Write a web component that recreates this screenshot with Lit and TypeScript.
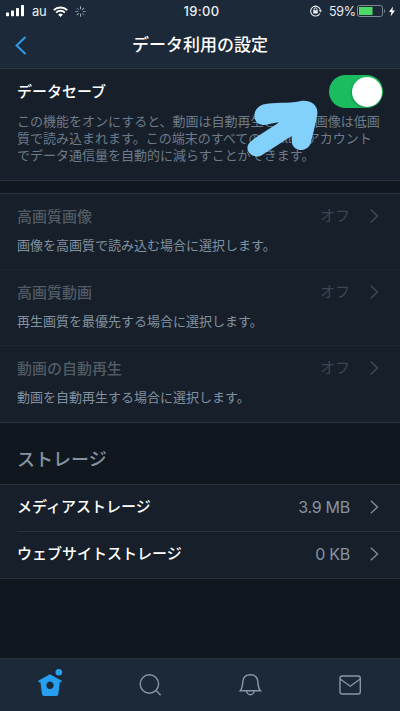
import { LitElement, html, css, svg, nothing } from "lit";
import { customElement, property } from "lit/decorators.js";

const fonts = css`"Liberation Sans", "Noto Sans CJK JP", sans-serif`;

@customElement("status-bar")
class StatusBar extends LitElement {
  static styles = css`
    :host { display: flex; height: 22px; color: #e8edf2; font-family: Inter, ${fonts}; font-size: 13px; line-height: 22px; }
    .side { flex: 1; display: flex; align-items: center; }
    .left { padding-left: 6px; }
    .right { justify-content: flex-end; padding-right: 5px; }
    .bars { width: 18px; height: 12px; margin-right: 8px; }
    .carrier { width: 14px; letter-spacing: -.4px; }
    .wifi { width: 15px; height: 11px; margin: 0 7px; }
    .spin { width: 11px; height: 11px; }
    .time { width: 40px; padding-left: 2px; box-sizing: border-box; text-align: center; font-weight: 500; letter-spacing: .35px; }
    .lock { width: 12px; height: 12px; margin-right: 7px; }
    .pct { font-size: 12.5px; letter-spacing: -.3px; width: 26px; white-space: nowrap; padding-top: 1px; }
    .batt { width: 28px; height: 12px; margin-left: 2px; }
    .bolt { width: 6px; height: 11px; margin-left: 4px; }
  `;
  render() {
    const rays = [0, 45, 90, 135, 180, 225, 270, 315];
    return html`
      <div class="side left">
        <svg class="bars" viewBox="0 0 18 12" fill="#fff">
          <rect x="0" y="7.5" width="3" height="3.8" rx=".7"/><rect x="5" y="5.5" width="3" height="5.8" rx=".7"/>
          <rect x="10" y="3" width="3" height="8.3" rx=".7"/><rect x="15" y="0" width="3" height="11.3" rx=".7"/>
        </svg>
        <span class="carrier">au</span>
        <svg class="wifi" viewBox="0 0 15 11" fill="none" stroke="#fff" stroke-width="2">
          <path d="M.8 4.1a9.6 9.6 0 0 1 13.4 0M3.2 6.6a6.2 6.2 0 0 1 8.6 0"/><path fill="#fff" stroke="none" d="M7.5 11 5.2 8.7a3.3 3.3 0 0 1 4.6 0z"/>
        </svg>
        <svg class="spin" viewBox="0 0 11 11" stroke="#a9b3be" stroke-width="1">
          ${rays.map((a, i) => svg`<path opacity=${1 - (i % 4) * 0.15} transform="rotate(${a} 5.5 5.5)" d="M5.5 .3v2.9"/>`)}
        </svg>
      </div>
      <div class="time">19:00</div>
      <div class="side right">
        <svg class="lock" viewBox="0 0 12 12" fill="none" stroke="#e8edf2">
          <path stroke-width="1.1" d="M9.9 8.4A4.9 4.9 0 1 1 10.4 5.2"/><path fill="#e8edf2" stroke="none" d="M8.8 5.3H12L10.4 7.6zM3.2 5.3h4.6v3.3H3.2z"/>
          <path d="M4.1 5.5V4.2a1.4 1.4 0 0 1 2.8 0v1.3"/>
        </svg>
        <span class="pct">59%</span>
        <svg class="batt" viewBox="0 0 28 12">
          <rect x=".5" y=".5" width="25" height="11" rx="2" fill="none" stroke="#7e8994"/>
          <rect x="2" y="2" width="13.5" height="8" fill="#4cd964"/><path d="M27 4v4q1-.6 1-2t-1-2z" fill="#7e8994"/>
        </svg>
        <svg class="bolt" viewBox="0 0 6 11" fill="#fff"><path d="M4 .5 0 6h2.5L1.5 10.5 6 4.6H3.4z"/></svg>
      </div>`;
  }
}

@customElement("setting-row")
class SettingRow extends LitElement {
  @property() label = "";
  @property() value = "";
  @property() note = "";
  @property({ type: Boolean, reflect: true }) dim = false;
  static styles = css`
    :host { display: block; height: 46px; font-family: ${fonts}; }
    .line { display: flex; align-items: center; height: 44px; padding: 0 21px 0 17px; }
    .label { flex: 1; color: #fff; font-size: 15px; font-weight: 500; line-height: 22px; }
    .value { color: #8592a0; font: 16px/22px Inter, ${fonts}; letter-spacing: -.25px; margin-right: 20px; }
    .chev { width: 9px; height: 14px; fill: none; stroke: #7f8c9a; stroke-width: 1.4; }
    .note { padding-left: 17px; font-size: 13px; line-height: 16px; color: #8190a0; }
    :host([dim]) .label { color: #515b66; padding-top: 2px; }
    :host([dim]) .value { color: #3b4652; font-size: 15px; letter-spacing: 0; }
    :host([dim]) .chev { stroke: #3f4b58; }
  `;
  render() {
    return html`<div class="line"><span class="label">${this.label}</span><span class="value">${this.value}</span>
      <svg class="chev" viewBox="0 0 9 14"><path d="M.8 .7 7.5 7 .8 13.3"/></svg></div>
      ${this.note ? html`<div class="note">${this.note}</div>` : nothing}`;
  }
}

@customElement("app-root")
class AppRoot extends LitElement {
  static styles = css`
    :host { display: flex; flex-direction: column; width: 400px; height: 711px; box-sizing: border-box; overflow: hidden; background: #10171e; font-family: ${fonts}; }
    .top { height: 69px; box-sizing: border-box; background: #1c2938; border-bottom: 1px solid #2c3843; }
    .nav { display: grid; grid-template-columns: 60px 1fr 60px; height: 46px; align-items: center; }
    .back { width: 12px; height: 19px; margin-left: 15px; }
    .title { text-align: center; color: #fff; font-size: 17px; font-weight: 500; line-height: 46px; padding-top: 1px; }
    .panel { background: #17202a; }
    .saver { position: relative; height: 112px; box-sizing: border-box; border-bottom: 1px solid #27313b; }
    .head { display: flex; align-items: center; justify-content: space-between; height: 44px; padding: 0 17px; color: #fff; font-size: 15px; font-weight: 500; }
    .name { padding-bottom: 1px; }
    .switch { width: 54px; height: 33px; box-sizing: border-box; padding: 1.5px; border-radius: 17px; background: #1bbc60; display: flex; justify-content: flex-end; margin-top: 1px; }
    .knob { width: 30px; height: 30px; border-radius: 50%; background: #fff; box-shadow: -1px 1px 2px #0d6b3980; }
    .text { padding-left: 17px; font-size: 13px; line-height: 17px; color: #6c7a89; white-space: nowrap; }
    .arrow { position: absolute; left: 246px; top: 31px; width: 72px; height: 58px; }
    .list { margin-top: 12px; height: 230px; box-sizing: border-box; border-top: 1px solid #29333d; border-bottom: 1px solid #29333d; }
    .list setting-row { height: 76px; box-sizing: border-box; border-bottom: 1px solid #1d2832; }
    .list setting-row:last-child { border-bottom: 0; }
    .section { height: 61px; line-height: 74px; padding-left: 17px; font-size: 18px; font-weight: 500; color: #8493a2; }
    .storage { border-top: 1px solid #29333d; border-bottom: 1px solid #29333d; }
    .rule { height: 1px; background: #29333d; margin-left: 17px; }
    .tabs { margin-top: auto; height: 53px; padding-bottom: 6px; box-sizing: border-box; border-top: 1px solid #28333e; background: #1c2938; display: grid; grid-template-columns: repeat(4, 1fr); justify-items: center; align-items: center; }
    .tab { width: 26px; height: 28px; fill: none; stroke: #8796a7; stroke-width: 1.4; }
  `;
  render() {
    return html`
      <header class="top">
        <status-bar></status-bar>
        <div class="nav">
          <svg class="back" viewBox="0 0 12 19" fill="none" stroke="#2f9cea" stroke-width="2"><path d="M10.5 1 1.6 9.5l8.9 8.5"/></svg>
          <div class="title">データ利用の設定</div>
        </div>
      </header>
      <section class="panel saver">
        <div class="head"><span class="name">データセーブ</span><div class="switch"><div class="knob"></div></div></div>
        <div class="text">この機能をオンにすると、動画は自動再生されず、画像は低画<br>質で読み込まれます。この端末のすべての Twitter アカウント<br>でデータ通信量を自動的に減らすことができます。</div>
        <svg class="arrow" viewBox="0 0 72 58"><path fill="#82d1fc" d="M17 4.5C28 1.5 42 4 54 1.2C63-.5 72 4 71.4 13.5C70 23 67 34 65 42C63 52 48 53 46 43L45.6 36C36 42 27 48 16 55C8 60 -1 52 2 45C4 41 8 39 12 36L33 22.5C27 22 23 25 17 25C6 24 5 9 17 4.5z"/></svg>
      </section>
      <section class="panel list">
        <setting-row dim label="高画質画像" value="オフ" note="画像を高画質で読み込む場合に選択します。"></setting-row>
        <setting-row dim label="高画質動画" value="オフ" note="再生画質を最優先する場合に選択します。"></setting-row>
        <setting-row dim label="動画の自動再生" value="オフ" note="動画を自動再生する場合に選択します。"></setting-row>
      </section>
      <div class="section">ストレージ</div>
      <section class="panel storage">
        <setting-row label="メディアストレージ" value="3.9 MB"></setting-row>
        <div class="rule"></div>
        <setting-row label="ウェブサイトストレージ" value="0 KB"></setting-row>
      </section>
      <nav class="tabs">
        <svg class="tab" viewBox="0 0 26 28"><path fill="#279ff0" stroke="none" fill-rule="evenodd" d="M13 6.2 24.3 12.4Q25.4 13.3 24.4 14.3L22.8 14.2 21.4 26Q21.2 28 19.3 28H7.3Q5.2 28 5 26L3.4 14.2 1.8 14.3Q.5 13.3 1.7 12.4zM13 13.6a3.7 3.7 0 1 0 .01 0z"/><circle cx="21.8" cy="4.2" r="3.3" fill="#279ff0" stroke="none"/></svg>
        <svg class="tab" viewBox="0 0 26 28"><circle cx="12.4" cy="16" r="9.2"/><path d="m19 22.5 4.7 4.7"/></svg>
        <svg class="tab" viewBox="0 0 26 28"><path d="M3.2 22.8C5.8 20 5.4 17 5.9 13.2 6.4 9 9.2 6.8 13.4 6.8s7 2.2 7.4 6.4c.4 3.8 0 6.8 2.6 9.6zM9.7 23a3.7 3.7 0 0 0 7.4 0"/></svg>
        <svg class="tab" viewBox="0 0 26 28"><rect x="3" y="8" width="20.3" height="18" rx="2.2"/><path d="m3.2 11 10 7.2 10-7.2"/></svg>
      </nav>`;
  }
}
